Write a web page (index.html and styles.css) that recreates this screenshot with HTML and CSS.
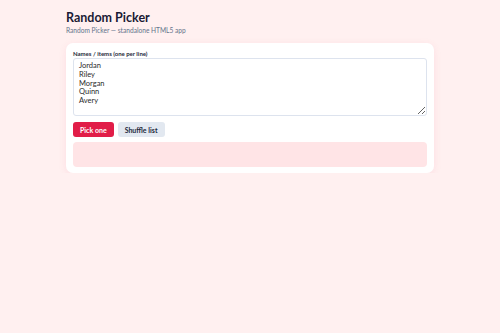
FILE: index.html
```html
<!DOCTYPE html>
<html>
<head>
<meta charset="utf-8">
<link rel="stylesheet" href="styles.css">
</head>
<body>
<div class="wrap">
  <h1 class="title">Random Picker</h1>
  <p class="sub">Random Picker — standalone HTML5 app</p>
  <div class="card">
    <label class="label">Names / items (one per line)</label>
    <textarea class="area">Jordan
Riley
Morgan
Quinn
Avery</textarea>
    <div class="btns">
      <button class="btn primary">Pick one</button>
      <button class="btn secondary">Shuffle list</button>
    </div>
    <div class="result"></div>
  </div>
</div>
</body>
</html>
```
FILE: styles.css
```css
html, body { margin: 0; padding: 0; }
body {
  background: #fff0f0;
  font-family: Lato, "Noto Sans", sans-serif;
  color: #0f172a;
}
.wrap {
  max-width: 368px;
  margin: 0 auto;
  padding-top: 10px;
}
.title {
  font-size: 12.5px;
  line-height: 15px;
  margin: 0;
  font-weight: 700;
  color: #1a1b35;
}
.sub {
  margin: 1px 0 0;
  font-size: 6.6px;
  line-height: 9px;
  color: #64748b;
}
.card {
  margin-top: 8px;
  background: #fff;
  border-radius: 7px;
  padding: 7px 7px 6px;
  box-shadow: 0 2px 8px rgba(225, 29, 72, 0.08);
  display: flex;
  flex-direction: column;
}
.label {
  font-size: 6px;
  font-weight: 700;
  line-height: 8px;
  color: #1e293b;
}
.area {
  margin-top: 0;
  height: 58px;
  box-sizing: border-box;
  border: 1px solid #dde3ee;
  border-radius: 3px;
  padding: 3px 5px;
  font-family: Lato, "Noto Sans", sans-serif;
  font-size: 7.5px;
  line-height: 8.8px;
  color: #2b2b2b;
  resize: vertical;
}
.btns {
  display: flex;
  gap: 4px;
  margin-top: 6px;
}
.btn {
  font-family: Lato, "Noto Sans", sans-serif;
  font-size: 7px;
  font-weight: 700;
  height: 15px;
  border: none;
  border-radius: 3px;
  padding: 0 7px;
  cursor: pointer;
}
.primary { background: #e11d48; color: #fff; }
.secondary { background: #e2e8f0; color: #1e293b; }
.result {
  margin-top: 5px;
  height: 25px;
  background: #ffe4e6;
  border-radius: 4px;
}
```
